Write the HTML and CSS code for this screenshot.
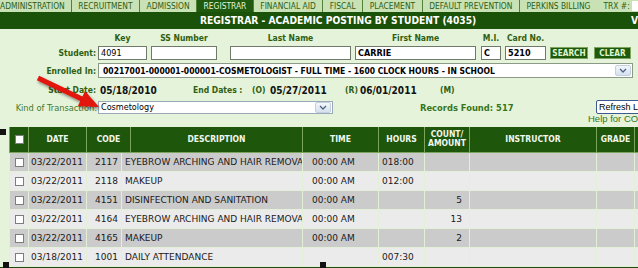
FILE: index.html
```html
<!DOCTYPE html>
<html lang="en">
<head>
    <meta charset="UTF-8">
    <title>Registrar - Academic Posting by Student</title>
    <link rel="stylesheet" href="styles.css">
</head>
<body>
<div class="page">
    <nav class="tabs">
        <span class="tab">ADMINISTRATION</span>
        <span class="tab">RECRUITMENT</span>
        <span class="tab">ADMISSION</span>
        <span class="tab active">REGISTRAR</span>
        <span class="tab">FINANCIAL AID</span>
        <span class="tab">FISCAL</span>
        <span class="tab">PLACEMENT</span>
        <span class="tab">DEFAULT PREVENTION</span>
        <span class="tab plain">PERKINS BILLING</span>
        <span class="tab trx">TRX #:<span class="trx-box"></span></span>
    </nav>

    <div class="title">
        <span class="title-text">REGISTRAR - ACADEMIC POSTING BY STUDENT (4035)</span>
        <span class="title-more">V</span>
    </div>

    <div class="panel">
        <div class="search-row">
            <div class="field f-label"><span class="row-label">Student:</span></div>
            <div class="field f-key"><span class="cap">Key</span><span class="box light">4091</span></div>
            <div class="field f-ss"><span class="cap">SS Number</span><span class="box"></span></div>
            <div class="field f-last"><span class="cap">Last Name</span><span class="box"></span></div>
            <div class="field f-first"><span class="cap">First Name</span><span class="box">CARRIE</span></div>
            <div class="field f-mi"><span class="cap">M.I.</span><span class="box">C</span></div>
            <div class="field f-card"><span class="cap">Card No.</span><span class="box">5210</span></div>
            <div class="field f-search"><span class="btn">SEARCH</span></div>
            <div class="field f-clear"><span class="btn">CLEAR</span></div>
        </div>

        <div class="enrolled-row">
            <span class="row-label side">Enrolled In:</span>
            <div class="select wide">
                <span class="select-text">00217001-000001-000001-COSMETOLOGIST - FULL TIME - 1600 CLOCK HOURS - IN SCHOOL</span>
                <span class="select-arrow"><svg width="8" height="5" viewBox="0 0 8 5"><path d="M1 1 L4 4 L7 1" fill="none" stroke="#4d6185" stroke-width="1.3"/></svg></span>
            </div>
        </div>

        <div class="dates-row">
            <span class="row-label side">Start Date:</span>
            <span class="date-val v1">05/18/2010</span>
            <span class="date-lbl end-lbl">End Dates :</span>
            <span class="date-lbl tag-o">(O)</span>
            <span class="date-val v2">05/27/2011</span>
            <span class="date-lbl tag-r">(R)</span>
            <span class="date-val v3">06/01/2011</span>
            <span class="date-lbl">(M)</span>
        </div>

        <div class="kind-row">
            <span class="kind-label">Kind of Transaction:</span>
            <div class="select narrow">
                <span class="select-text normal">Cosmetology</span>
                <span class="select-arrow"><svg width="8" height="5" viewBox="0 0 8 5"><path d="M1 1 L4 4 L7 1" fill="none" stroke="#4d6185" stroke-width="1.3"/></svg></span>
            </div>
            <span class="records">Records Found: 517</span>
            <span class="refresh">Refresh List</span>
        </div>
        <div class="help-row">Help for CODES</div>
    </div>

    <!-- header and body are separate tables, as in the scrolling grid -->
    <table class="grid grid-head">
        <colgroup>
            <col class="c-chk"><col class="c-date"><col class="h-code"><col class="h-desc"><col class="c-time">
            <col class="c-hours"><col class="c-count"><col class="c-instr"><col class="c-grade"><col class="c-more">
        </colgroup>
        <tr>
            <th><span class="chk"></span></th>
            <th>DATE</th>
            <th>CODE</th>
            <th>DESCRIPTION</th>
            <th>TIME</th>
            <th>HOURS</th>
            <th>COUNT/<br>AMOUNT</th>
            <th>INSTRUCTOR</th>
            <th>GRADE</th>
            <th></th>
        </tr>
    </table>
    <table class="grid grid-body">
        <colgroup>
            <col class="c-chk"><col class="c-date"><col class="b-code"><col class="b-desc"><col class="c-time">
            <col class="c-hours"><col class="c-count"><col class="c-instr"><col class="c-grade"><col class="c-more">
        </colgroup>
        <tr class="dark">
            <td><span class="chk"></span></td><td>03/22/2011</td><td class="num">2117</td>
            <td>EYEBROW ARCHING AND HAIR REMOVAL</td><td class="time">00:00 AM</td><td class="hrs">018:00</td>
            <td class="num"></td><td></td><td></td><td></td>
        </tr>
        <tr>
            <td><span class="chk"></span></td><td>03/22/2011</td><td class="num">2118</td>
            <td>MAKEUP</td><td class="time">00:00 AM</td><td class="hrs">012:00</td>
            <td class="num"></td><td></td><td></td><td></td>
        </tr>
        <tr class="dark">
            <td><span class="chk"></span></td><td>03/22/2011</td><td class="num">4151</td>
            <td>DISINFECTION AND SANITATION</td><td class="time">00:00 AM</td><td class="hrs"></td>
            <td class="num">5</td><td></td><td></td><td></td>
        </tr>
        <tr>
            <td><span class="chk"></span></td><td>03/22/2011</td><td class="num">4164</td>
            <td>EYEBROW ARCHING AND HAIR REMOVAL</td><td class="time">00:00 AM</td><td class="hrs"></td>
            <td class="num">13</td><td></td><td></td><td></td>
        </tr>
        <tr class="dark">
            <td><span class="chk"></span></td><td>03/22/2011</td><td class="num">4165</td>
            <td>MAKEUP</td><td class="time">00:00 AM</td><td class="hrs"></td>
            <td class="num">2</td><td></td><td></td><td></td>
        </tr>
        <tr>
            <td><span class="chk"></span></td><td>03/18/2011</td><td class="num">1001</td>
            <td>DAILY ATTENDANCE</td><td class="time"></td><td class="hrs">007:30</td>
            <td class="num"></td><td></td><td></td><td></td>
        </tr>
    </table>
    <div class="footer"></div>

    <!-- annotation overlay: red arrow and resize handles -->
    <svg class="arrow" width="638" height="268" viewBox="0 0 638 268">
        <defs>
            <filter id="shadow" x="-20%" y="-20%" width="140%" height="160%">
                <feDropShadow dx="1" dy="2" stdDeviation="1.5" flood-color="#000" flood-opacity="0.45"/>
            </filter>
        </defs>
        <g filter="url(#shadow)">
            <line x1="38" y1="78" x2="84" y2="100" stroke="#e3120f" stroke-width="5"/>
            <polygon points="99,107 85,91 78,106" fill="#e3120f"/>
        </g>
    </svg>
    <span class="handle h1"></span>
    <span class="handle h2"></span>
    <span class="handle h3"></span>
</div>
</body>
</html>
```

FILE: styles.css
```css
* {
    box-sizing: border-box;
}
body {
    margin: 0;
    font-family: "DejaVu Sans Condensed", "DejaVu Sans", sans-serif;
    background-color: #e5f3da;
}
.page {
    position: relative;
    width: 638px;
    height: 268px;
    overflow: hidden;
}

/* top tabs */
.tabs {
    display: flex;
    height: 12px;
    background-color: #c9e2b5;
    color: #2c5e16;
    font-size: 8.4px;
    line-height: 12px;
    white-space: nowrap;
}
.tab {
    flex: none;
    padding: 0 6.5px;
    border-right: 1px solid #4f8137;
}
.tab:first-child {
    padding-left: 0;
    padding-right: 6px;
}
.tab.active {
    background-color: #1f5a0e;
    color: #e3f2d8;
}
.tab.plain {
    border-right: 0;
}
.tab.trx {
    display: flex;
    border-right: 0;
}
.trx-box {
    width: 40px;
    height: 10px;
    margin: 1px 0 0 2px;
    background-color: #fff;
}

/* title bar */
.title {
    display: flex;
    height: 17px;
    padding-left: 200px;
    background-color: #1b520a;
    color: #fff;
    font-size: 10.2px;
    font-weight: bold;
    line-height: 17px;
    white-space: nowrap;
}
.title-more {
    margin-left: auto;
}

/* search panel */
.panel {
    height: 98px;
    padding-top: 3px;
}
.search-row {
    display: flex;
    align-items: flex-end;
}
.field {
    display: flex;
    flex: none;
    flex-direction: column;
    align-items: center;
}
.cap {
    color: #2f5f12;
    font-size: 8.5px;
    font-weight: bold;
    line-height: 12px;
}
.box {
    width: 100%;
    height: 14px;
    margin-top: 2px;
    padding: 0 2px;
    border: 1px solid #6f7a6a;
    background-color: #fff;
    font-size: 9px;
    font-weight: bold;
    line-height: 12px;
}
.box.light {
    font-weight: normal;
}
.f-label { width: 96px; margin-right: 2px; align-items: flex-end; }
.f-key { width: 49px; margin-right: 4px; }
.f-ss { width: 66px; margin-right: 13px; }
.f-last { width: 121px; margin-right: 4px; }
.f-first { width: 121px; margin-right: 5px; }
.f-mi { width: 20px; margin-right: 4px; }
.f-card { width: 41px; margin-right: 4px; }
.f-search { width: 38px; margin-right: 6px; }
.f-clear { width: 37px; }

.row-label {
    color: #2f5f12;
    font-size: 8.5px;
    font-weight: bold;
    line-height: 14px;
}
.btn {
    width: 100%;
    height: 12px;
    margin-bottom: 1px;
    border: 1px solid #7da35e;
    background-color: #1e5a0d;
    color: #dff5cf;
    font-size: 8.2px;
    font-weight: bold;
    line-height: 10px;
    text-align: center;
}

.enrolled-row,
.dates-row,
.kind-row {
    display: flex;
    align-items: center;
    white-space: nowrap;
}
.enrolled-row > *,
.dates-row > *,
.kind-row > * {
    flex: none;
}
.enrolled-row {
    margin-top: 3px;
}
.side {
    width: 96px;
    margin-right: 2px;
    text-align: right;
}
.select {
    display: flex;
    align-items: center;
    height: 15px;
    padding: 0 1px 0 4px;
    border: 1px solid #8a9a84;
    background-color: #fff;
}
.select.wide {
    width: 535px;
}
.select.narrow {
    width: 235px;
    height: 13px;
    padding-left: 2px;
    border-color: #9aa8b8;
}
.select-text {
    flex: 1;
    font-size: 8.5px;
    font-weight: bold;
}
.select-text.normal {
    font-size: 9px;
    font-weight: normal;
}
.select-arrow {
    display: flex;
    align-items: center;
    justify-content: center;
    width: 16px;
    height: 11px;
    border: 1px solid #c3d0e0;
    border-radius: 2px;
    background: linear-gradient(#f4f7fb, #d5e0ee);
}

.dates-row {
    height: 14px;
    margin-top: 5px;
}
.dates-row .side {
    margin-right: 4px;
}
.date-val {
    color: #111;
    font-size: 10px;
    font-weight: bold;
}
.date-lbl {
    color: #2f5f12;
    font-size: 8.5px;
    font-weight: bold;
}
.v1 { width: 93px; }
.end-lbl { width: 59px; }
.tag-o { width: 18px; }
.v2 { width: 75px; }
.tag-r { width: 15px; }
.v3 { width: 80px; }

.kind-row {
    height: 14px;
    margin-top: 3px;
}
.kind-label {
    width: 98px;
    padding-right: 1px;
    color: #46782a;
    font-size: 9.2px;
    text-align: right;
}
.records {
    width: 176px;
    margin-left: 87px;
    color: #37761a;
    font-size: 9.3px;
    font-weight: bold;
}
.refresh {
    height: 14px;
    padding: 0 2px;
    border: 1px solid #3d5a8e;
    border-radius: 2px;
    background-color: #fff;
    font-family: "Liberation Sans", Arial, sans-serif;
    font-size: 9px;
    line-height: 12px;
}
.help-row {
    padding-left: 588px;
    color: #37761a;
    font-family: "Liberation Sans", Arial, sans-serif;
    font-size: 9.5px;
    line-height: 10px;
    white-space: nowrap;
}

/* results grid */
.grid {
    width: 665px;
    margin-left: 9px;
    border-collapse: collapse;
    table-layout: fixed;
}
.c-chk { width: 19px; }
.c-date { width: 58px; }
.h-code { width: 44px; }
.h-desc { width: 172px; }
.b-code { width: 35px; }
.b-desc { width: 181px; }
.c-time { width: 76px; }
.c-hours { width: 46px; }
.c-count { width: 45px; }
.c-instr { width: 127px; }
.c-grade { width: 38px; }
.c-more { width: 40px; }
.grid th {
    height: 25px;
    padding: 0;
    border: 1px solid #7ba45f;
    border-top: 0;
    background-color: #1e560c;
    color: #f2f8ee;
    font-size: 8.5px;
    line-height: 9px;
    font-weight: bold;
}
.grid-body {
    font-family: "DejaVu Sans", Verdana, sans-serif;
    font-size: 9px;
}
.grid td {
    height: 19px;
    padding: 0 0 0 2px;
    border: 1px solid #e2f0d8;
    border-top: 0;
    background-color: #ebebeb;
    color: #1a1a1a;
    overflow: hidden;
    white-space: nowrap;
}
.grid tr.dark td {
    background-color: #cbcbcb;
}
.grid td.num {
    padding: 0 3px 0 0;
    text-align: right;
}
.grid td:nth-child(4) {
    padding-left: 3px;
}
.grid td.num:nth-child(7) {
    padding-right: 7px;
}
.grid td.time {
    padding-left: 9px;
}
.grid td.hrs {
    padding-left: 3px;
}
.grid td:first-child,
.grid th:first-child {
    padding: 0;
    text-align: center;
}
.chk {
    display: inline-block;
    width: 9px;
    height: 9px;
    border: 1px solid #7d7d7d;
    background-color: #fff;
    vertical-align: middle;
}
.footer {
    height: 4px;
    background-color: #1e4a10;
}

/* overlay */
.arrow {
    position: absolute;
    top: 0;
    left: 0;
    pointer-events: none;
}
.handle {
    position: absolute;
    width: 6px;
    height: 6px;
    background-color: #111;
}
.h1 { left: 0; top: 129px; }
.h2 { left: 3px; top: 262px; }
.h3 { left: 320px; top: 262px; }
```
